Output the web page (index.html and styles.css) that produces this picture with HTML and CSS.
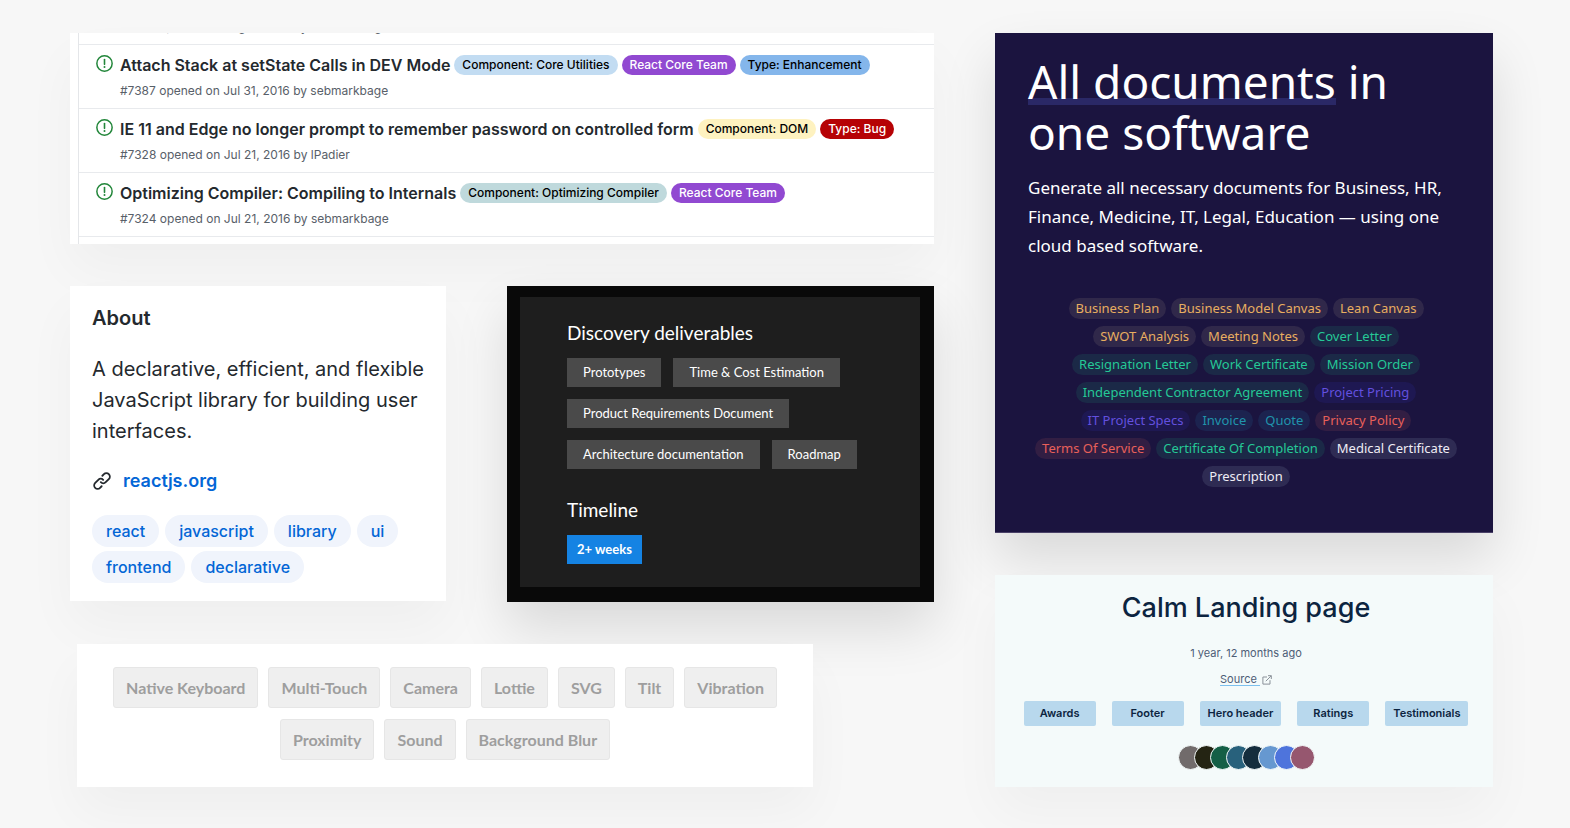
FILE: index.html
```html
<!DOCTYPE html>
<html lang="en">
<head>
<meta charset="utf-8">
<title>Tag examples</title>
<link rel="stylesheet" href="styles.css">
</head>
<body>
<svg class="sprite" aria-hidden="true">
  <symbol id="open" viewBox="0 0 16 16"><circle cx="8" cy="8" r="7.2" fill="none" stroke="currentColor" stroke-width="1.4"/><path d="M8 4.2v4.6" stroke="currentColor" stroke-width="1.5" stroke-linecap="round"/><circle cx="8" cy="11.3" r=".95" fill="currentColor"/></symbol>
</svg>
<main class="board">
  <div class="col">
    <section class="card issues">
      <ul class="issue-list">
        <li class="issue">
          <svg class="issue-icon"><use href="#open"/></svg>
          <div>
            <p class="issue-title"></p>
            <p class="issue-meta">#7407 opened on Aug 3, 2016 by sebmarkbage</p>
          </div>
        </li>
        <li class="issue">
          <svg class="issue-icon"><use href="#open"/></svg>
          <div>
            <p class="issue-title"><span class="issue-name">Attach Stack at setState Calls in DEV Mode</span><span class="label sky">Component: Core Utilities</span><span class="label purple">React Core Team</span><span class="label blue">Type: Enhancement</span></p>
            <p class="issue-meta">#7387 opened on Jul 31, 2016 by sebmarkbage</p>
          </div>
        </li>
        <li class="issue">
          <svg class="issue-icon"><use href="#open"/></svg>
          <div>
            <p class="issue-title"><span class="issue-name">IE 11 and Edge no longer prompt to remember password on controlled form</span><span class="label cream">Component: DOM</span><span class="label red">Type: Bug</span></p>
            <p class="issue-meta">#7328 opened on Jul 21, 2016 by lPadier</p>
          </div>
        </li>
        <li class="issue">
          <svg class="issue-icon"><use href="#open"/></svg>
          <div>
            <p class="issue-title"><span class="issue-name">Optimizing Compiler: Compiling to Internals</span><span class="label teal">Component: Optimizing Compiler</span><span class="label purple">React Core Team</span></p>
            <p class="issue-meta">#7324 opened on Jul 21, 2016 by sebmarkbage</p>
          </div>
        </li>
      </ul>
    </section>
    <div class="pair">
      <section class="card about">
        <h2 class="about-title">About</h2>
        <p class="about-text">A declarative, efficient, and flexible JavaScript library for building user interfaces.</p>
        <p class="about-link">
          <svg class="link-icon" viewBox="0 0 16 16" aria-hidden="true"><path fill="currentColor" d="M7.775 3.275a.75.75 0 001.06 1.06l1.25-1.25a2 2 0 112.83 2.83l-2.5 2.5a2 2 0 01-2.83 0 .75.75 0 00-1.06 1.06 3.5 3.5 0 004.95 0l2.5-2.5a3.5 3.5 0 00-4.95-4.95l-1.25 1.25zm-4.69 9.64a2 2 0 010-2.83l2.5-2.5a2 2 0 012.83 0 .75.75 0 001.06-1.06 3.5 3.5 0 00-4.95 0l-2.5 2.5a3.5 3.5 0 004.95 4.95l1.25-1.25a.75.75 0 00-1.06-1.06l-1.25 1.25a2 2 0 01-2.83 0z"/></svg>
          <a href="#">reactjs.org</a>
        </p>
        <div class="topics">
          <a class="topic" href="#">react</a><a class="topic" href="#">javascript</a><a class="topic" href="#">library</a><a class="topic" href="#">ui</a><a class="topic" href="#">frontend</a><a class="topic" href="#">declarative</a>
        </div>
      </section>
      <section class="card discovery">
        <div class="discovery-inner">
          <h2 class="discovery-title">Discovery deliverables</h2>
          <div class="boxes">
            <span class="box">Prototypes</span><span class="box">Time &amp; Cost Estimation</span><span class="box">Product Requirements Document</span><span class="box">Architecture documentation</span><span class="box">Roadmap</span>
          </div>
          <h2 class="discovery-title timeline">Timeline</h2>
          <div class="boxes"><span class="box accent">2+ weeks</span></div>
        </div>
      </section>
    </div>
    <section class="card features">
      <span class="feature">Native Keyboard</span><span class="feature">Multi-Touch</span><span class="feature">Camera</span><span class="feature">Lottie</span><span class="feature">SVG</span><span class="feature">Tilt</span><span class="feature">Vibration</span><span class="feature">Proximity</span><span class="feature">Sound</span><span class="feature">Background Blur</span>
    </section>
  </div>
  <div class="col">
    <section class="card docs">
      <h1 class="docs-title"><span class="marked">All documents</span> in one software</h1>
      <p class="docs-text">Generate all necessary documents for Business, HR, Finance, Medicine, IT, Legal, Education — using one cloud based software.</p>
      <div class="doc-tags">
        <span class="doc gold">Business Plan</span><span class="doc gold">Business Model Canvas</span><span class="doc gold">Lean Canvas</span><span class="doc gold">SWOT Analysis</span><span class="doc gold">Meeting Notes</span><span class="doc green">Cover Letter</span><span class="doc green">Resignation Letter</span><span class="doc green">Work Certificate</span><span class="doc green">Mission Order</span><span class="doc green">Independent Contractor Agreement</span><span class="doc violet">Project Pricing</span><span class="doc violet">IT Project Specs</span><span class="doc cyan">Invoice</span><span class="doc cyan">Quote</span><span class="doc coral">Privacy Policy</span><span class="doc coral">Terms Of Service</span><span class="doc green">Certificate Of Completion</span><span class="doc white">Medical Certificate</span><span class="doc white">Prescription</span>
      </div>
    </section>
    <section class="card calm">
      <h2 class="calm-title">Calm Landing page</h2>
      <p class="calm-age">1 year, 12 months ago</p>
      <p class="calm-source"><a href="#">Source&nbsp;</a><svg class="ext-icon" viewBox="0 0 10 10" aria-hidden="true"><path d="M5 2H.9v7.1H8V5.2M6 .7h3.3V4M9.2.8L3.8 6.2" fill="none" stroke="currentColor" stroke-width="1"/></svg></p>
      <div class="calm-tags">
        <span class="calm-tag">Awards</span><span class="calm-tag">Footer</span><span class="calm-tag">Hero header</span><span class="calm-tag">Ratings</span><span class="calm-tag">Testimonials</span>
      </div>
      <div class="swatches">
        <i class="swatch s1"></i><i class="swatch s2"></i><i class="swatch s3"></i><i class="swatch s4"></i><i class="swatch s5"></i><i class="swatch s6"></i><i class="swatch s7"></i><i class="swatch s8"></i>
      </div>
    </section>
  </div>
</main>
</body>
</html>
```
FILE: styles.css
```css
* { box-sizing: border-box; }
body { margin: 0; background: #f7f7f7; font-family: Inter, "Liberation Sans", sans-serif; }
h1, h2, p, ul { margin: 0; padding: 0; }
a { text-decoration: none; }
.sprite { display: none; }

.board { display: grid; grid-template-columns: 864fr 498fr; gap: 61px; padding: 33px 77px 41px 70px; }
.col { display: flex; flex-direction: column; gap: 42px; min-width: 0; }
.card { background: #fff; box-shadow: 0 26px 50px rgba(0, 0, 0, .035); }

.issues { overflow: hidden; padding-left: 8px; }
.issue-list { list-style: none; margin-top: -52px; padding-bottom: 7px; border-left: 1px solid #e4e6e9; }
.issue { display: flex; gap: 7px; height: 64px; padding: 10px 0 0 17px; border-bottom: 1px solid #e8eaed; }
.issue-icon { width: 17px; height: 17px; color: #22863a; flex: none; }
.issue-title { display: flex; align-items: center; gap: 4px; height: 20px; white-space: nowrap; }
.issue-name { font-size: 16px; font-weight: 600; color: #24292e; }
.issue-meta { margin-top: 7px; font-size: 12px; line-height: 18px; color: #586069; }
.label { padding: 0 8px; border-radius: 10px; font-size: 12px; font-weight: 500; line-height: 20px; color: #000; }
.sky { background: #c2dcf2; }
.purple { background: #9149d1; color: #fff; }
.blue { background: #84b6eb; }
.cream { background: #fef2c0; }
.red { background: #b60205; color: #fff; }
.teal { background: #bfd9dc; }

.pair { display: grid; grid-template-columns: 376fr 427fr; gap: 61px; align-items: start; }
.about { padding: 18px 22px 18px; color: #24292e; }
.about-title { font-size: 20px; line-height: 28px; font-weight: 600; }
.about-text { margin-top: 22px; font-size: 20px; line-height: 31px; }
.about-link { display: flex; align-items: center; gap: 11px; margin-top: 20px; font-size: 18px; line-height: 28px; font-weight: 600; }
.link-icon { width: 20px; height: 20px; }
.about-link a { color: #0366d6; }
.topics { display: flex; flex-wrap: wrap; gap: 4px 6px; margin-top: 20px; }
.topic { padding: 0 14px; border-radius: 16px; background: #f0f4fc; color: #0366d6; font-size: 16px; line-height: 32px; font-weight: 500; }

.discovery { padding: 11px 14px 15px 13px; background: #090909; box-shadow: 0 26px 50px rgba(0, 0, 0, .12); font-family: Lato, "Noto Sans", sans-serif; }
.discovery-inner { padding: 23px 47px; background: #1e1e1e; color: #fff; }
.discovery-title { font-size: 19px; line-height: 26px; font-weight: 400; }
.timeline { margin-top: 28px; }
.boxes { display: flex; flex-wrap: wrap; gap: 12px; margin-top: 12px; }
.box { padding: 0 16px; background: #4a4a4a; font-size: 13px; line-height: 29px; }
.accent { padding: 0 10px; background: #1583e3; font-weight: 700; }

.features { display: flex; flex-wrap: wrap; justify-content: center; gap: 11px 10px; margin: 0 121px 0 7px; padding: 23px 20px 27px; }
.feature { padding: 0 12px; border: 1px solid #e6e6e6; border-radius: 3px; background: #efefef; color: #9e9e9e; font-family: Lato, sans-serif; font-size: 16px; line-height: 39px; font-weight: 700; }

.docs { padding: 23px 33px 45px; border-bottom: 1px solid #4a4168; background: #1b143f; box-shadow: 0 26px 50px rgba(0, 0, 0, .12); color: #fff; font-family: "Noto Sans", sans-serif; }
.docs-title { font-size: 46px; line-height: 51px; font-weight: 400; }
.marked { background: linear-gradient(#2a2866, #2a2866) 0 48px / 100% 7px no-repeat; }
.docs-text { margin-top: 15px; font-size: 17px; line-height: 29px; }
.doc-tags { display: flex; flex-wrap: wrap; justify-content: center; gap: 7px 5px; margin-top: 38px; padding-left: 4px; }
.doc { padding: 0 7px; border-radius: 11px; font-size: 13px; line-height: 21px; }
.gold { background: #30284a; color: #e8ae60; }
.green { background: #1b2947; color: #25c896; }
.violet { background: #1e1852; color: #6350df; }
.cyan { background: #1c234f; color: #2094ac; }
.coral { background: #321e43; color: #e9605a; }
.white { background: #2e2b53; color: #eeedf5; }

.calm { display: flex; flex-direction: column; align-items: center; padding: 15px 22px 17px 26px; background: #f4fafa; color: #0c2440; }
.calm-title { font-size: 27px; line-height: 36px; font-weight: 500; }
.calm-age { margin-top: 18px; font-size: 11px; line-height: 18px; color: #4d5d76; }
.calm-source { display: flex; align-items: center; gap: 2px; margin-top: 11px; font-size: 11px; line-height: 16px; color: #8a9199; }
.calm-source a { color: #4d5d76; border-bottom: 1px solid #7cc0ee; line-height: 12px; }
.ext-icon { width: 10px; height: 10px; }
.calm-tags { display: flex; justify-content: center; gap: 16px; margin-top: 15px; }
.calm-tag { min-width: 72px; padding: 0 8px; border-radius: 2px; background: #b8d8ed; font-size: 11px; line-height: 25px; font-weight: 600; text-align: center; }
.swatches { display: flex; margin-top: 19px; padding-left: 9px; }
.swatch { width: 25px; height: 25px; margin-left: -9px; border: 1px solid #f4fafa; border-radius: 50%; }
.s1 { background: #716b6b; }
.s2 { background: #242413; }
.s3 { background: #145f46; }
.s4 { background: #28617c; }
.s5 { background: #142d3d; }
.s6 { background: #6698d0; }
.s7 { background: #4e74dc; }
.s8 { background: #96576f; }
```
